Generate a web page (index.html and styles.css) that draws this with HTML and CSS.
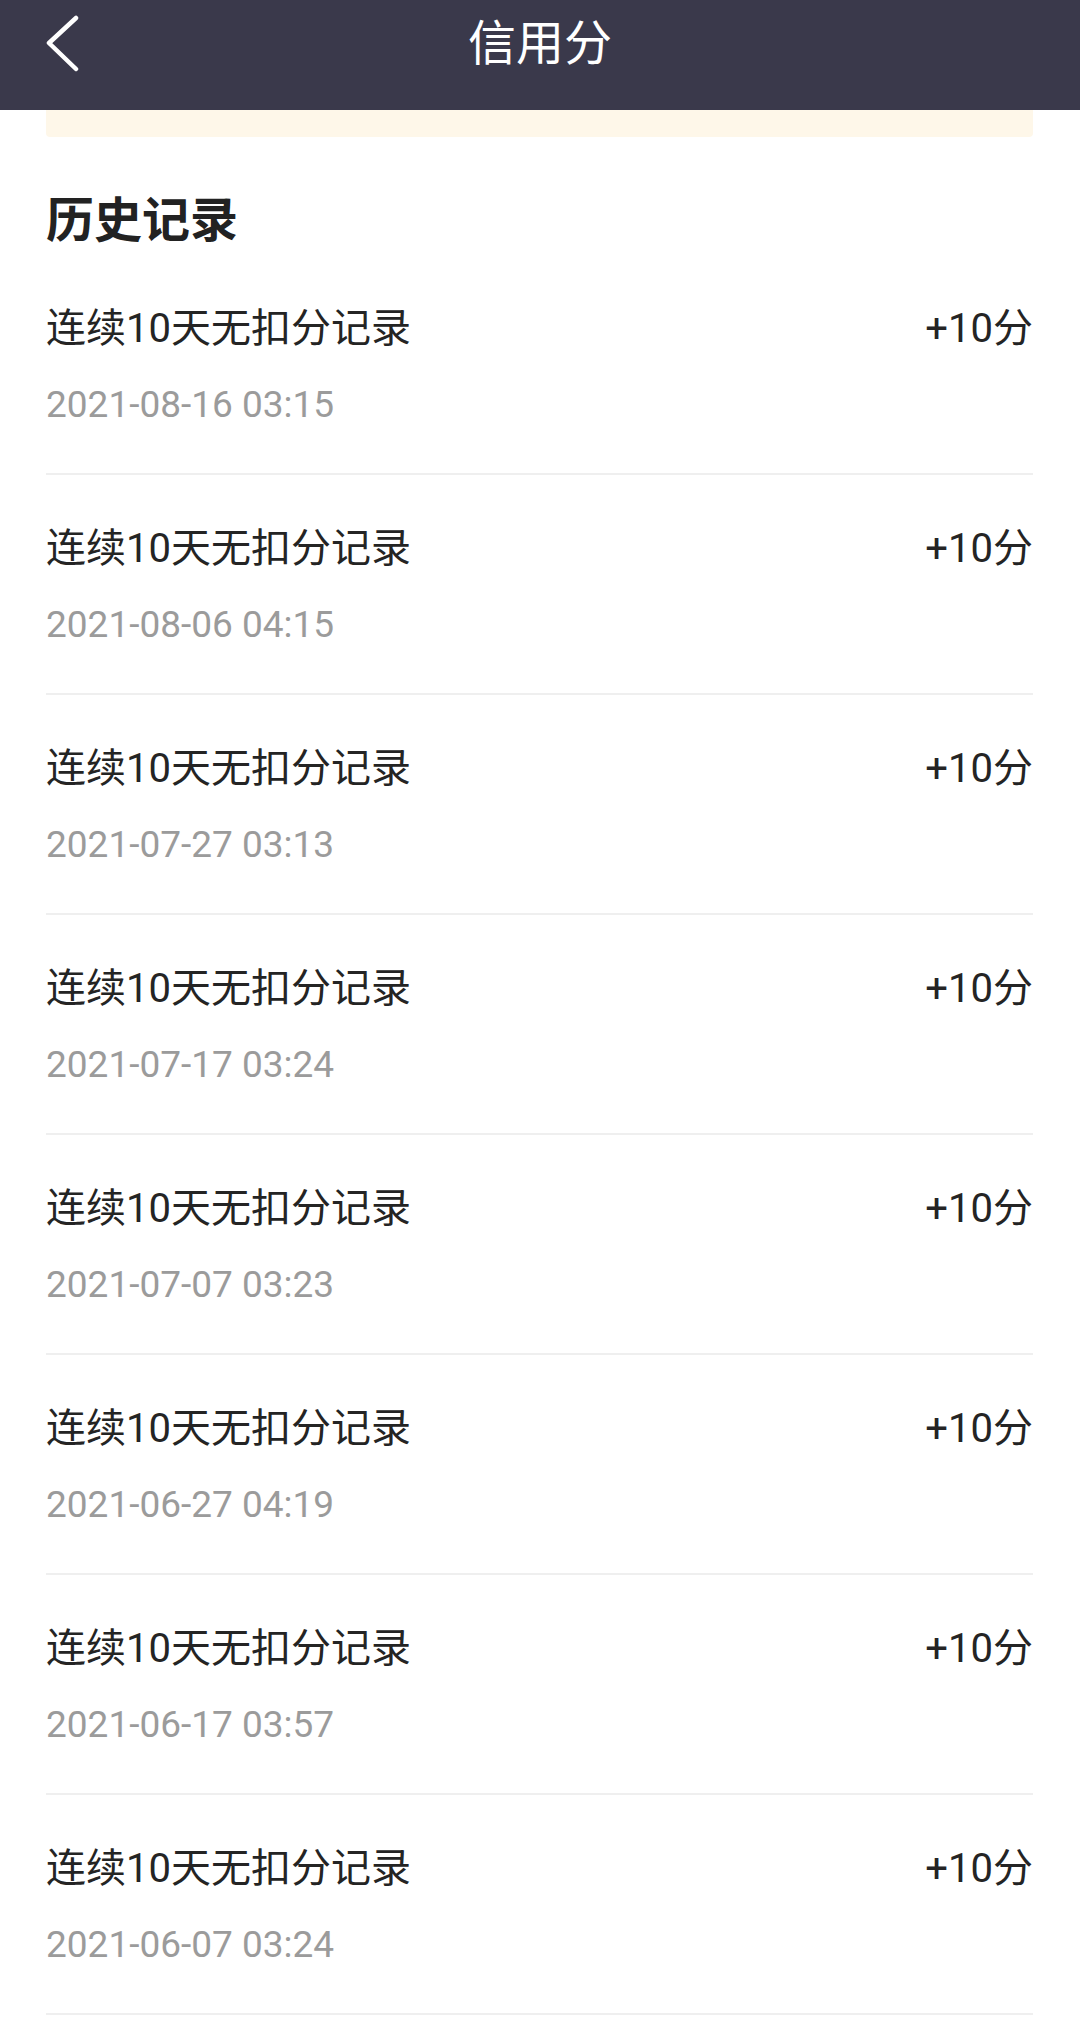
FILE: index.html
```html
<!DOCTYPE html>
<html>
<head>
  <meta charset="utf-8">
  <title>信用分</title>
  <link rel="stylesheet" href="styles.css">
</head>
<body>
  <div class="navbar">
    <button class="nav-back" aria-label="返回">
      <svg viewBox="0 0 40 60" width="40" height="60">
        <polyline points="30,4 3,29 30,55" fill="none" stroke="#fff" stroke-width="4.5" stroke-linecap="round" stroke-linejoin="round"/>
      </svg>
    </button>
    <h1 class="nav-title">信用分</h1>
  </div>

  <div class="container">
    <div class="notice"></div>

    <h2 class="section-title">历史记录</h2>

    <ul class="record-list">
      <li class="record">
        <div class="record-main">
          <span class="record-name">连续10天无扣分记录</span>
          <span class="record-score">+10分</span>
        </div>
        <div class="record-time">2021-08-16 03:15</div>
      </li>
      <li class="record">
        <div class="record-main">
          <span class="record-name">连续10天无扣分记录</span>
          <span class="record-score">+10分</span>
        </div>
        <div class="record-time">2021-08-06 04:15</div>
      </li>
      <li class="record">
        <div class="record-main">
          <span class="record-name">连续10天无扣分记录</span>
          <span class="record-score">+10分</span>
        </div>
        <div class="record-time">2021-07-27 03:13</div>
      </li>
      <li class="record">
        <div class="record-main">
          <span class="record-name">连续10天无扣分记录</span>
          <span class="record-score">+10分</span>
        </div>
        <div class="record-time">2021-07-17 03:24</div>
      </li>
      <li class="record">
        <div class="record-main">
          <span class="record-name">连续10天无扣分记录</span>
          <span class="record-score">+10分</span>
        </div>
        <div class="record-time">2021-07-07 03:23</div>
      </li>
      <li class="record">
        <div class="record-main">
          <span class="record-name">连续10天无扣分记录</span>
          <span class="record-score">+10分</span>
        </div>
        <div class="record-time">2021-06-27 04:19</div>
      </li>
      <li class="record">
        <div class="record-main">
          <span class="record-name">连续10天无扣分记录</span>
          <span class="record-score">+10分</span>
        </div>
        <div class="record-time">2021-06-17 03:57</div>
      </li>
      <li class="record">
        <div class="record-main">
          <span class="record-name">连续10天无扣分记录</span>
          <span class="record-score">+10分</span>
        </div>
        <div class="record-time">2021-06-07 03:24</div>
      </li>
    </ul>
  </div>
</body>
</html>
```

FILE: styles.css
```css
:root {
  --nav-bg: #3a394b;
  --text-primary: #242424;
  --text-muted: #9b9b9b;
  --border: #efefef;
  --notice-bg: #fef7e9;
}

* {
  margin: 0;
  padding: 0;
  box-sizing: border-box;
}

body {
  width: 1080px;
  font-family: Roboto, "Noto Sans CJK SC", sans-serif;
  background: #fff;
  color: var(--text-primary);
  -webkit-font-smoothing: antialiased;
}

.navbar {
  position: relative;
  height: 110px;
  background: var(--nav-bg);
  display: flex;
  align-items: flex-start;
  justify-content: center;
}

.nav-back {
  position: absolute;
  left: 46px;
  top: 14px;
  width: 40px;
  height: 60px;
  border: none;
  background: none;
}

.nav-back svg {
  display: block;
}

.nav-title {
  margin-top: 14px;
  font-size: 48px;
  line-height: 60px;
  font-weight: 400;
  color: #fff;
}

.container {
  padding: 0 47px 0 46px;
}

.notice {
  height: 27px;
  background: var(--notice-bg);
  border-radius: 0 0 4px 4px;
}

.section-title {
  margin-top: 54px;
  font-size: 48px;
  line-height: 60px;
  font-weight: 700;
  color: #222;
}

.record-list {
  list-style: none;
  margin-top: 4px;
}

.record {
  padding: 50px 0 46px;
  border-bottom: 2px solid var(--border);
}

.record-main {
  display: flex;
  justify-content: space-between;
  align-items: center;
  font-size: 40px;
  line-height: 48px;
}

.record-time {
  margin-top: 30px;
  font-size: 37px;
  line-height: 44px;
  color: var(--text-muted);
}
```
